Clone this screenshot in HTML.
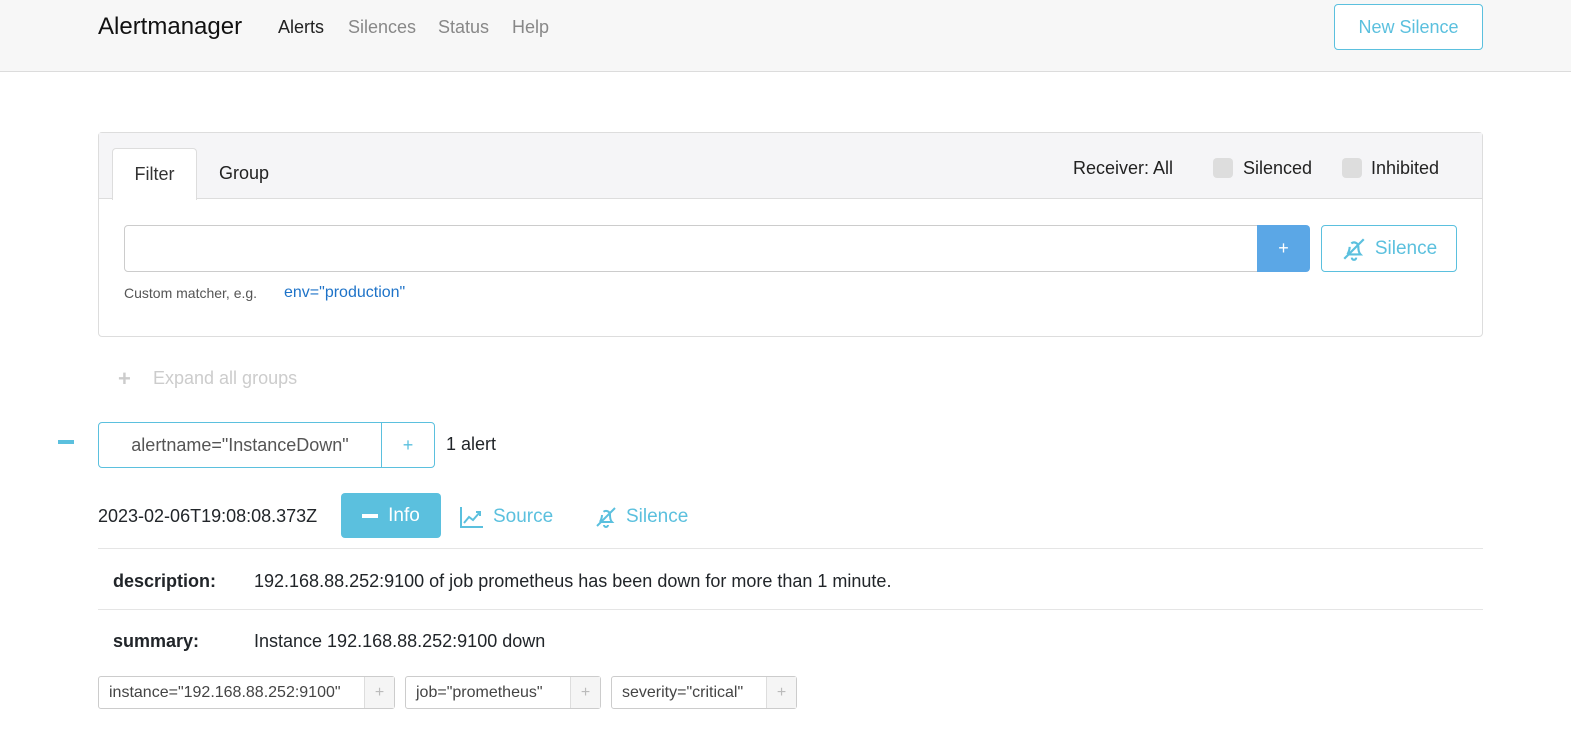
<!DOCTYPE html>
<html><head><meta charset="utf-8"><style>
*{box-sizing:border-box;margin:0;padding:0}
body{width:1571px;height:743px;overflow:hidden;background:#fff;font-family:"Liberation Sans",sans-serif;color:#212529;position:relative}
.a{position:absolute;white-space:nowrap}
.nav{position:absolute;left:0;top:0;width:1571px;height:72px;background:#f7f7f7;border-bottom:1px solid #dcdcdc}
.btn-o{position:absolute;border:1px solid #5bc0de;border-radius:4px;color:#5bc0de;background:#fff;display:flex;align-items:center;justify-content:center}
.lab{position:absolute;top:676px;height:33px;border:1px solid #ccc;border-radius:3px;display:flex;font-size:16px;color:#444}
.lab span{padding:0 10px;display:flex;align-items:center}
.lab i{font-style:normal;width:30px;border-left:1px solid #ddd;background:#f5f5f5;color:#bbb;display:flex;align-items:center;justify-content:center}
</style></head><body>
<div class="nav"></div>
<div class="a" style="left:98px;top:13px;font-size:24px;color:#111">Alertmanager</div>
<div class="a" style="left:278px;top:17px;font-size:18px;color:#222">Alerts</div>
<div class="a" style="left:348px;top:17px;font-size:18px;color:#888">Silences</div>
<div class="a" style="left:438px;top:17px;font-size:18px;color:#888">Status</div>
<div class="a" style="left:512px;top:17px;font-size:18px;color:#888">Help</div>
<div class="btn-o" style="left:1334px;top:4px;width:149px;height:46px;font-size:18px">New Silence</div>

<div class="a" style="left:98px;top:132px;width:1385px;height:205px;border:1px solid #ddd;border-radius:4px"></div>
<div class="a" style="left:99px;top:133px;width:1383px;height:66px;background:#f5f5f7;border-bottom:1px solid #ddd"></div>
<div class="a" style="left:112px;top:148px;width:85px;height:52px;background:#fff;border:1px solid #ddd;border-bottom:none;border-radius:4px 4px 0 0;font-size:18px;display:flex;align-items:center;justify-content:center;color:#333">Filter</div>
<div class="a" style="left:219px;top:163px;font-size:18px;color:#222">Group</div>
<div class="a" style="left:1073px;top:158px;font-size:18px;color:#222">Receiver: All</div>
<div class="a" style="left:1213px;top:158px;width:20px;height:20px;background:#ddd;border-radius:4px"></div>
<div class="a" style="left:1243px;top:158px;font-size:18px;color:#222">Silenced</div>
<div class="a" style="left:1342px;top:158px;width:20px;height:20px;background:#ddd;border-radius:4px"></div>
<div class="a" style="left:1371px;top:158px;font-size:18px;color:#222">Inhibited</div>

<div class="a" style="left:124px;top:225px;width:1134px;height:47px;border:1px solid #ccc;border-radius:4px 0 0 4px"></div>
<div class="a" style="left:1257px;top:225px;width:53px;height:47px;background:#5ba7e6;border-radius:0 4px 4px 0;color:#fff;font-size:18px;display:flex;align-items:center;justify-content:center">+</div>
<div class="btn-o" style="left:1321px;top:225px;width:136px;height:47px;font-size:19px">
<svg width="26" height="26" viewBox="0 0 24 24" fill="none" stroke="#5bc0de" stroke-width="2" style="margin-right:8px"><path d="M3 21L21 3M6 17h12c-2-2-2-5-2-7a4 4 0 0 0-6.5-3.2M8 10c0 3-1 5-2 7M10 20a2 2 0 0 0 4 0"/></svg>Silence</div>
<div class="a" style="left:124px;top:285px;font-size:14px;color:#555">Custom matcher, e.g.</div>
<div class="a" style="left:284px;top:284px;font-size:16px;color:#1e73c8">env="production"</div>

<div class="a" style="left:118px;top:366px;font-size:22px;color:#ccc;font-weight:bold">+</div>
<div class="a" style="left:153px;top:368px;font-size:18px;color:#ccc">Expand all groups</div>

<div class="a" style="left:58px;top:440px;width:16px;height:4px;background:#5bc0de"></div>
<div class="a" style="left:98px;top:422px;width:337px;height:46px;border:1px solid #5bc0de;border-radius:4px;display:flex">
<div style="width:283px;border-right:1px solid #5bc0de;display:flex;align-items:center;justify-content:center;font-size:18px;color:#555">alertname="InstanceDown"</div>
<div style="flex:1;display:flex;align-items:center;justify-content:center;color:#5bc0de;font-size:18px">+</div></div>
<div class="a" style="left:446px;top:434px;font-size:18px">1 alert</div>

<div class="a" style="left:98px;top:506px;font-size:18px">2023-02-06T19:08:08.373Z</div>
<div class="a" style="left:341px;top:493px;width:100px;height:45px;background:#5bc0de;border-radius:4px;color:#fff;font-size:19px;display:flex;align-items:center;justify-content:center"><span style="width:16px;height:4px;background:#fff;margin-right:10px;display:inline-block"></span>Info</div>
<svg class="a" style="left:460px;top:506px" width="24" height="22" viewBox="0 0 24 22" fill="none" stroke="#5bc0de" stroke-width="2"><path d="M1 1v20h22M4 17l5-6 4 3 7-8M16 6h4v4"/></svg>
<div class="a" style="left:493px;top:506px;font-size:19px;color:#5bc0de">Source</div>
<svg class="a" style="left:594px;top:505px" width="24" height="24" viewBox="0 0 24 24" fill="none" stroke="#5bc0de" stroke-width="2"><path d="M3 21L21 3M6 17h12c-2-2-2-5-2-7a4 4 0 0 0-6.5-3.2M8 10c0 3-1 5-2 7M10 20a2 2 0 0 0 4 0"/></svg>
<div class="a" style="left:626px;top:506px;font-size:19px;color:#5bc0de">Silence</div>

<div class="a" style="left:98px;top:548px;width:1385px;height:1px;background:#e5e5e5"></div>
<div class="a" style="left:113px;top:571px;font-size:18px;font-weight:bold">description:</div>
<div class="a" style="left:254px;top:571px;font-size:18px">192.168.88.252:9100 of job prometheus has been down for more than 1 minute.</div>
<div class="a" style="left:98px;top:609px;width:1385px;height:1px;background:#e5e5e5"></div>
<div class="a" style="left:113px;top:631px;font-size:18px;font-weight:bold">summary:</div>
<div class="a" style="left:254px;top:631px;font-size:18px">Instance 192.168.88.252:9100 down</div>

<div class="lab" style="left:98px;width:297px"><span style="flex:1">instance="192.168.88.252:9100"</span><i>+</i></div>
<div class="lab" style="left:405px;width:196px"><span style="flex:1">job="prometheus"</span><i>+</i></div>
<div class="lab" style="left:611px;width:186px"><span style="flex:1">severity="critical"</span><i>+</i></div>
</body></html>
